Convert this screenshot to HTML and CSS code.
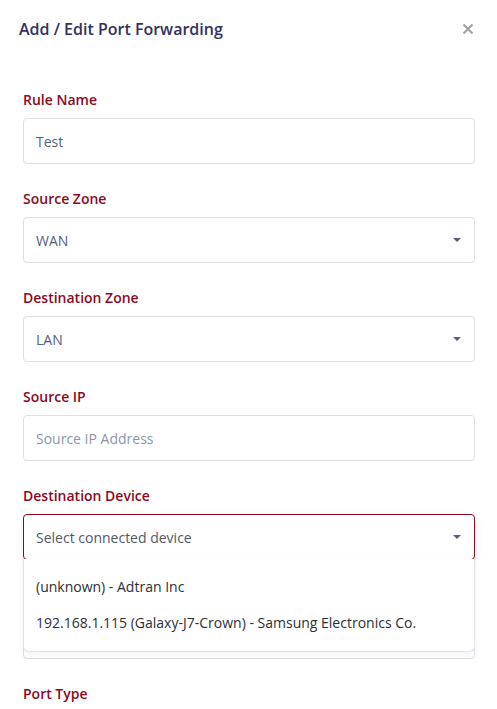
FILE: index.html
```html
<!DOCTYPE html>
<html lang="en">
<head>
  <meta charset="UTF-8">
  <meta name="viewport" content="width=device-width, initial-scale=1.0">
  <title>Add / Edit Port Forwarding</title>
  <link rel="stylesheet" href="styles.css">
</head>
<body>
  <div class="modal">
    <div class="modal-header">
      <h5 class="modal-title">Add / Edit Port Forwarding</h5>
      <button class="close" aria-label="Close">
        <svg width="12" height="12" viewBox="0 0 12 12">
          <path d="M1.5 1.5 L10.5 10.5 M10.5 1.5 L1.5 10.5" stroke="currentColor" stroke-width="2.2" fill="none"/>
        </svg>
      </button>
    </div>

    <form class="modal-body">
      <div class="form-group">
        <label>Rule Name</label>
        <div class="form-control">Test</div>
      </div>

      <div class="form-group">
        <label>Source Zone</label>
        <div class="form-control select">WAN<span class="caret"></span></div>
      </div>

      <div class="form-group">
        <label>Destination Zone</label>
        <div class="form-control select">LAN<span class="caret"></span></div>
      </div>

      <div class="form-group">
        <label>Source IP</label>
        <div class="form-control placeholder">Source IP Address</div>
      </div>

      <div class="form-group">
        <label>Destination Device</label>
        <div class="dropdown">
          <div class="form-control select open">Select connected device<span class="caret"></span></div>
          <ul class="dropdown-menu">
            <li>(unknown) - Adtran Inc</li>
            <li>192.168.1.115 (Galaxy-J7-Crown) - Samsung Electronics Co.</li>
          </ul>
        </div>
      </div>

      <!-- hidden under the open menu -->
      <div class="form-group">
        <label class="spacer"></label>
        <div class="form-control"></div>
      </div>

      <div class="form-group">
        <label>Port Type</label>
      </div>
    </form>
  </div>
</body>
</html>
```

FILE: styles.css
```css
body {
  margin: 0;
  background: #fff;
  font-family: 'Open Sans', sans-serif;
  overflow: hidden;
}

.modal {
  height: 709px;
  overflow: hidden;
}

.modal-header {
  display: flex;
  justify-content: space-between;
  align-items: center;
  padding: 17px 23px 0 19px;
}

.modal-title {
  margin: 0;
  font-size: 16px;
  font-weight: 600;
  line-height: 24px;
  color: #32325d;
}

.close {
  display: flex;
  padding: 0;
  border: none;
  background: none;
  color: #a3a3a3;
  cursor: pointer;
}

.modal-body {
  padding: 48px 22px 0 23px;
}

.form-group {
  margin-bottom: 24px;
}

label {
  display: block;
  margin-bottom: 8px;
  font-size: 14px;
  font-weight: 600;
  line-height: 21px;
  color: #8a0a1f;
}

.spacer {
  height: 21px;
}

.form-control {
  box-sizing: border-box;
  display: flex;
  align-items: center;
  height: 46px;
  padding: 0 12px;
  border: 1px solid #dee0e8;
  border-radius: 4px;
  font-size: 14px;
  color: #525f7f;
  background: #fff;
}

.placeholder {
  color: #8d96a6;
}

.select {
  position: relative;
}

.caret {
  position: absolute;
  right: 13px;
  top: 20px;
  border-left: 4px solid transparent;
  border-right: 4px solid transparent;
  border-top: 4px solid #525f7f;
}

.open {
  border-color: #8a0a1f;
  color: #525866;
  box-shadow: 0 3px 9px rgba(50, 50, 93, 0.08);
}

.dropdown {
  position: relative;
}

.dropdown-menu {
  position: absolute;
  top: 45px;
  left: 0;
  right: 0;
  z-index: 2;
  margin: 0;
  padding: 10px 0;
  list-style: none;
  background: #fff;
  border: 1px solid #e2e3ea;
  border-top: none;
  border-radius: 0 0 6px 6px;
  box-shadow: 0 4px 8px rgba(50, 50, 93, 0.06);
}

.dropdown-menu li {
  padding: 0 12px;
  font-size: 14px;
  line-height: 36px;
  color: #2b2f36;
}
```
